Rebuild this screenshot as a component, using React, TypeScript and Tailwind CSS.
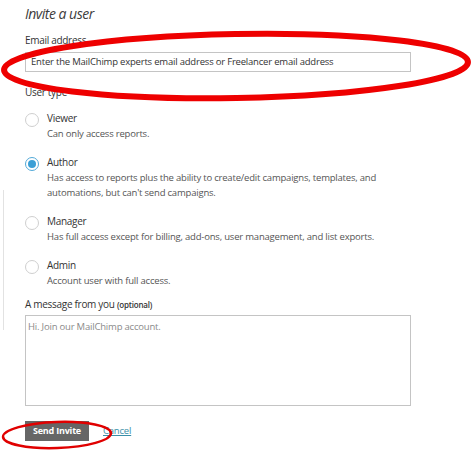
import { useState } from "react";

const roles = [
  { id: "viewer", label: "Viewer", desc: ["Can only access reports."] },
  {
    id: "author",
    label: "Author",
    desc: [
      "Has access to reports plus the ability to create/edit campaigns, templates, and",
      "automations, but can't send campaigns.",
    ],
  },
  {
    id: "manager",
    label: "Manager",
    desc: ["Has full access except for billing, add-ons, user management, and list exports."],
  },
  { id: "admin", label: "Admin", desc: ["Account user with full access."] },
];

function Radio({ checked }: { checked: boolean }) {
  if (checked) {
    return (
      <span className="mt-[3px] flex h-[14px] w-[14px] shrink-0 items-center justify-center rounded-full border-[1.5px] border-[#52a9d8] bg-white">
        <span className="h-[8px] w-[8px] rounded-full bg-[#3a9fd6]" />
      </span>
    );
  }
  return <span className="mt-[3px] h-[14px] w-[14px] shrink-0 rounded-full border border-[#cfcfcf] bg-white" />;
}

export default function App() {
  const [role, setRole] = useState("author");

  return (
    <div className="relative h-[451px] w-[472px] overflow-hidden bg-white font-['Open_Sans',sans-serif] text-[#333]">
      {/* faint crop edge */}
      <div className="absolute left-[3px] top-[190px] h-[140px] w-px bg-[#e2e2e2]" />

      <div className="flex flex-col px-[25px] pt-[4px]">
        <h1 className="text-[14px] italic leading-[20px] tracking-[-0.5px] text-[#3c3c3c]">Invite a user</h1>

        <label className="mt-[8px] text-[10px] leading-[16px] tracking-[-0.3px]">Email address</label>
        <div className="mt-[4px] flex h-[20px] w-[386px] items-center border border-[#c4c4c4] px-[5px] text-[9.5px] tracking-[-0.2px] text-[#333]">
          Enter the MailChimp experts email address or Freelancer email address
        </div>

        <div className="mt-[12px] text-[10px] leading-[16px] tracking-[-0.3px]">User type</div>

        <div className="mt-[10px] flex flex-col gap-[13px]">
          {roles.map((r) => (
            <div key={r.id} className="flex cursor-pointer gap-[8px]" onClick={() => setRole(r.id)}>
              <Radio checked={role === r.id} />
              <div className="flex flex-col">
                <span className="text-[10px] leading-[16px] tracking-[-0.3px] text-[#333]">{r.label}</span>
                {r.desc.map((line) => (
                  <span key={line} className="text-[9.5px] leading-[15px] tracking-[-0.2px] text-[#555]">
                    {line}
                  </span>
                ))}
              </div>
            </div>
          ))}
        </div>

        <div className="mt-[8px] text-[10px] leading-[16px] tracking-[-0.3px]">
          A message from you <span className="text-[8px] font-semibold tracking-[-0.2px]">(optional)</span>
        </div>
        <div className="mt-[2px] h-[91px] w-[386px] border border-[#c4c4c4] px-[2px] py-[3px] text-[9.5px] leading-[15px] tracking-[-0.2px] text-[#8a8a8a]">
          Hi. Join our MailChimp account.
        </div>

        <div className="mt-[15px] flex items-center gap-[14px]">
          <button className="h-[20px] w-[64px] bg-[#666] text-[9px] font-bold tracking-[-0.2px] text-white">Send Invite</button>
          <a className="text-[9.5px] tracking-[-0.2px] text-[#3a8fa8] underline">Cancel</a>
        </div>
      </div>

      {/* annotation marks */}
      <svg className="pointer-events-none absolute left-0 top-0" width="472" height="451">
        <ellipse cx="236" cy="66" rx="232" ry="32" fill="none" stroke="#ee0000" strokeWidth="6" transform="rotate(-1 236 66)" />
        <ellipse cx="57" cy="435" rx="54" ry="13" fill="none" stroke="#e00000" strokeWidth="2.5" transform="rotate(-2 57 435)" />
      </svg>
    </div>
  );
}
